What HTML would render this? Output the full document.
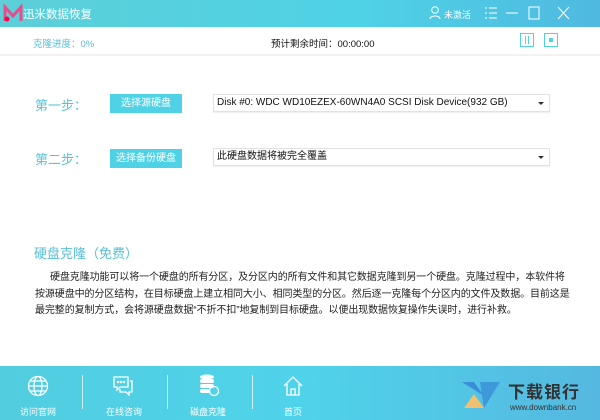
<!DOCTYPE html>
<html><head><meta charset="utf-8"><style>
*{margin:0;padding:0;box-sizing:border-box}
body{width:600px;height:420px;overflow:hidden;background:#fff;font-family:"Liberation Sans","Noto Sans CJK SC",sans-serif;position:relative}
.a{position:absolute}
.top{left:0;top:0;width:600px;height:27px;background:linear-gradient(90deg,#5ccfd8,#4fd2e6 60%,#4fb9e0)}
.foot{left:0;top:366px;width:600px;height:54px;background:linear-gradient(90deg,#52cde0,#4fd3ea 50%,#55b8e0)}
.btn{background:#4fd2e6;color:#fff;font-size:10px;text-align:center;line-height:19px;height:19px}
.sel{border:1px solid #e2e2e2;background:#fff;font-size:10px;line-height:16px;padding-left:3px;color:#111;height:18px;box-shadow:0 1px 1px #eee}
.sel:after{content:"";position:absolute;right:5px;top:7px;border:3px solid transparent;border-top:3px solid #333}
.step{color:#58c3d8;font-size:13px}
.fi{color:#fff;font-size:9px;text-align:center;width:60px}
.sep{width:1px;height:34px;background:rgba(255,255,255,.7);top:375px}
p{font-size:10px;color:#222;line-height:16.5px}
</style></head><body>
<div class="a top"></div>
<svg class="a" style="left:3px;top:4px" width="20" height="20" viewBox="0 0 20 20"><path d="M2 17V3l8 9 8-9v14" fill="none" stroke="#e84d8a" stroke-width="3"/><circle cx="4" cy="15" r="2.5" fill="#f04"/></svg>
<div class="a" style="left:23px;top:6px;color:#fff;font-size:11.5px">迅米数据恢复</div>
<svg class="a" style="left:429px;top:6px" width="12" height="13"><circle cx="6" cy="4" r="3.3" fill="none" stroke="#fff"/><path d="M1 13c0-4 10-4 10 0" fill="none" stroke="#fff"/></svg>
<div class="a" style="left:444px;top:8px;color:#fff;font-size:9px">未激活</div>
<svg class="a" style="left:484px;top:6px" width="100" height="14" stroke="#fff" fill="none"><path d="M1 2h2M5 2h8M1 7h2M5 7h8M1 12h2M5 12h8M22 7h12M45 1h10v12h-10zM74 1l11 12M85 1l-11 12"/></svg>
<div class="a" style="left:33px;top:36px;color:#58bfd8;font-size:9.5px">克隆进度：0%</div>
<div class="a" style="left:271px;top:36px;color:#111;font-size:9.5px">预计剩余时间：00:00:00</div>
<div class="a" style="left:520px;top:33px;width:14px;height:14px;border:1px solid #4fd2e6"></div>
<div class="a" style="left:525px;top:36px;width:4px;height:8px;border-left:1px solid #4fd2e6;border-right:1px solid #4fd2e6"></div>
<div class="a" style="left:544px;top:33px;width:14px;height:14px;border:1px solid #4fd2e6"></div>
<div class="a" style="left:549px;top:38px;width:4px;height:4px;background:#4fd2e6"></div>
<div class="a" style="left:0;top:54px;width:600px;height:2px;background:#f2f2f2"></div>

<div class="a step" style="left:35px;top:95px">第一步：</div>
<div class="a btn" style="left:110px;top:94px;width:72px">选择源硬盘</div>
<div class="a sel" style="left:213px;top:94px;width:337px">Disk #0: WDC WD10EZEX-60WN4A0 SCSI Disk Device(932 GB)</div>
<div class="a step" style="left:35px;top:149px">第二步：</div>
<div class="a btn" style="left:110px;top:149px;width:72px">选择备份硬盘</div>
<div class="a sel" style="left:213px;top:148px;width:337px">此硬盘数据将被完全覆盖</div>

<div class="a" style="left:34px;top:243px;color:#58bfd8;font-size:13px">硬盘克隆（免费）</div>
<div class="a" style="left:35px;top:270px;width:535px"><p style="text-indent:15px;letter-spacing:-0.1px">硬盘克隆功能可以将一个硬盘的所有分区，及分区内的所有文件和其它数据克隆到另一个硬盘。克隆过程中，本软件将按源硬盘中的分区结构，在目标硬盘上建立相同大小、相同类型的分区。然后逐一克隆每个分区内的文件及数据。目前这是最完整的复制方式，会将源硬盘数据“不折不扣”地复制到目标硬盘。以便出现数据恢复操作失误时，进行补救。</p></div>

<div class="a foot"></div>
<svg class="a" style="left:27px;top:375px" width="22" height="22" fill="none" stroke="#fff" stroke-width="1.3"><circle cx="11" cy="11" r="9.5"/><ellipse cx="11" cy="11" rx="4" ry="9.5"/><path d="M1.5 11h19M3 6h16M3 16h16"/></svg>
<div class="a fi" style="left:8px;top:405px">访问官网</div>
<div class="a sep" style="left:82px"></div>
<svg class="a" style="left:112px;top:375px" width="22" height="22" fill="none" stroke="#fff" stroke-width="1.3"><path d="M2 2h14v10H8l-3 3v-3H2z"/><path d="M18 6h2v11h-3v3l-3-3H8v-3"/><circle cx="6" cy="7" r=".6"/><circle cx="9" cy="7" r=".6"/><circle cx="12" cy="7" r=".6"/></svg>
<div class="a fi" style="left:94px;top:405px">在线咨询</div>
<div class="a sep" style="left:167px"></div>
<svg class="a" style="left:198px;top:374px" width="22" height="23" fill="#fff"><ellipse cx="9" cy="3" rx="7" ry="2.5"/><rect x="2" y="5" width="14" height="4" rx="2"/><rect x="2" y="10" width="14" height="4" rx="2"/><rect x="2" y="15" width="10" height="4" rx="2"/><circle cx="16" cy="17" r="4.5" fill="none" stroke="#fff" stroke-width="1.3"/></svg>
<div class="a fi" style="left:178px;top:405px">磁盘克隆</div>
<div class="a sep" style="left:252px"></div>
<svg class="a" style="left:282px;top:375px" width="22" height="22" fill="none" stroke="#fff" stroke-width="1.3"><path d="M2 11L11 2l9 9M5 9v11h12V9M9 20v-6h4v6"/></svg>
<div class="a fi" style="left:263px;top:405px">首页</div>

<svg class="a" style="left:462px;top:380px" width="40" height="30"><path d="M0 2h12l10 14z" fill="#3a8fd8"/><path d="M18 2h20L22 28z" fill="#3a8fd8" opacity=".8"/><path d="M2 28l10-14 10 14z" fill="#f0c070"/></svg>
<div class="a" style="left:508px;top:378px;color:#333;font-size:17px;font-weight:bold;letter-spacing:1px">下载银行</div>
<div class="a" style="left:510px;top:403px;color:#333;font-size:8px">www.downbank.cn</div>
</body></html>
